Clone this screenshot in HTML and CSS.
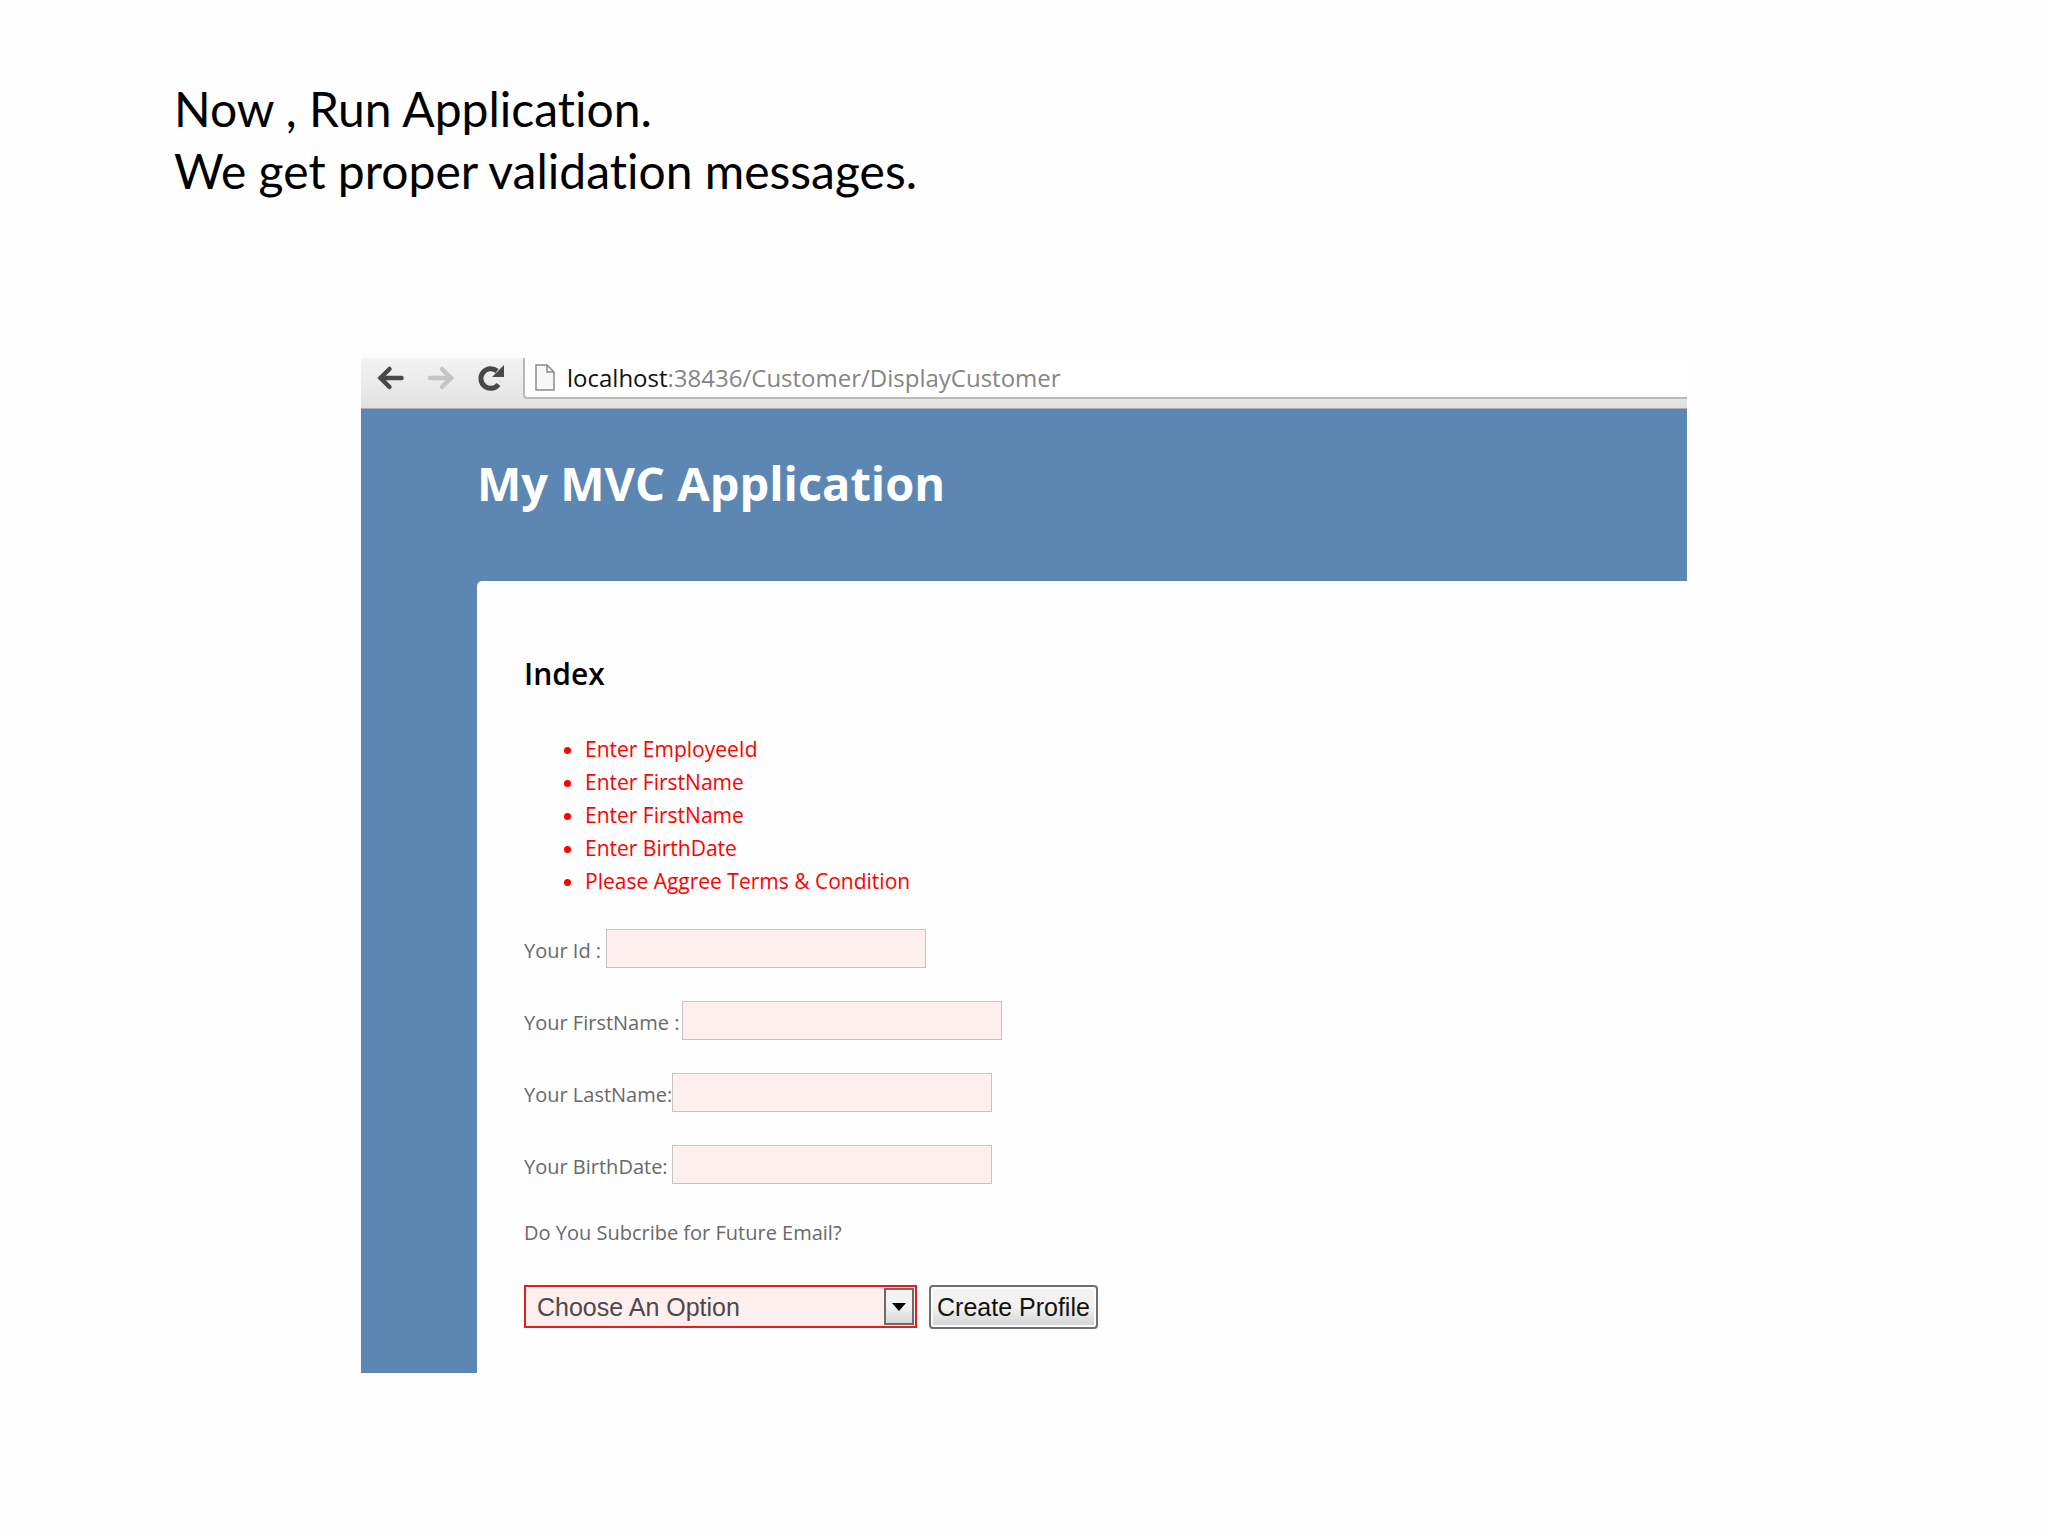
FILE: index.html
```html
<!DOCTYPE html>
<html lang="en">
<head>
<meta charset="utf-8">
<title>My MVC Application</title>
<link rel="stylesheet" href="styles.css">
</head>
<body>
<main class="slide">
  <p class="note">Now , Run Application.<br>We get proper validation messages.</p>
  <section class="browser">
    <div class="toolbar">
      <button class="nav" type="button" aria-label="Back">
        <svg width="28" height="26" viewBox="0 0 28 26" fill="none" stroke="#484848" stroke-width="4.500" stroke-linecap="round"><path d="M4 13H24.500M12.500 4L3.500 13L12.500 22"/></svg>
      </button>
      <button class="nav" type="button" aria-label="Forward" disabled>
        <svg width="28" height="26" viewBox="0 0 28 26" fill="none" stroke="#c4c4c4" stroke-width="4.500" stroke-linecap="round"><path d="M3 13H23.500M15 4L24 13L15 22"/></svg>
      </button>
      <button class="nav" type="button" aria-label="Reload">
        <svg width="28" height="28" viewBox="0 0 28 28"><path d="M21.500 20.500A9.800 9.800 0 1 1 20 7" fill="none" stroke="#484848" stroke-width="5"/><path d="M27 1V13H15Z" fill="#484848"/></svg>
      </button>
      <div class="address">
        <svg width="20" height="27" viewBox="0 0 20 27" fill="#f7f7f7" stroke="#8a8a8a" stroke-width="1.500"><path d="M1 1H12L19 8V26H1ZM12 1V8H19"/></svg>
        <span class="url"><span class="host">localhost</span>:38436/Customer/DisplayCustomer</span>
      </div>
    </div>
    <div class="site">
      <header class="banner"><h1 class="title">My MVC Application</h1></header>
      <div class="page">
        <h2 class="heading">Index</h2>
        <ul class="errors">
          <li>Enter EmployeeId</li>
          <li>Enter FirstName</li>
          <li>Enter FirstName</li>
          <li>Enter BirthDate</li>
          <li>Please Aggree Terms &amp; Condition</li>
        </ul>
        <form class="form">
          <div class="row"><label class="label label-short" for="id">Your Id :</label><input class="field" id="id" type="text"></div>
          <div class="row"><label class="label label-long" for="first">Your FirstName :</label><input class="field" id="first" type="text"></div>
          <div class="row"><label class="label" for="last">Your LastName:</label><input class="field" id="last" type="text"></div>
          <div class="row"><label class="label" for="birth">Your BirthDate:</label><input class="field" id="birth" type="text"></div>
          <label class="question" for="mail">Do You Subcribe for Future Email?</label>
          <div class="actions">
            <div class="picker">
              <select class="select" id="mail"><option>Choose An Option</option></select>
              <span class="arrow"><svg width="14" height="8" viewBox="0 0 14 8"><path d="M0 0H14L7 8Z"/></svg></span>
            </div>
            <button class="create" type="submit">Create Profile</button>
          </div>
        </form>
      </div>
    </div>
  </section>
</main>
</body>
</html>
```
FILE: styles.css
```css
* { box-sizing: border-box; }

body {
  margin: 0;
  background: #fefefe;
  color: #000;
}

.slide { padding: 78px 361px 164px; }

.note {
  margin: 0 0 156px -187px;
  font: 48px/62px Lato, sans-serif;
  font-variant-ligatures: none;
}

/* Browser toolbar */
.toolbar {
  display: flex;
  align-items: flex-start;
  height: 51px;
  padding-left: 16px;
  background: linear-gradient(#f3f3f3, #e2e2e2);
  border-bottom: 1px solid #a9b0b5;
}

.nav {
  display: flex;
  align-items: center;
  width: 50px;
  height: 40px;
  padding: 0;
  border: 0;
  background: none;
}

.address {
  display: flex;
  flex: 1;
  align-items: center;
  gap: 12px;
  height: 41px;
  margin-left: -4px;
  padding-left: 10px;
  background: #fff;
  border: solid #b9b9b9;
  border-width: 0 0 2px 2px;
  border-bottom-left-radius: 4px;
}

.url {
  color: #858585;
  font: 24px/36px "Open Sans", sans-serif;
}

.host { color: #111; }

/* Application page */
.site {
  padding-left: 116px;
  background: #5c87b2;
}

.banner { padding: 50px 0 74px; }

.title {
  margin: 0;
  color: #fff;
  font: bold 47px/48px "Open Sans", sans-serif;
}

.page {
  padding: 72px 47px 44px;
  background: #fefefe;
  border-top-left-radius: 5px;
  color: #696969;
  font: 20px/33px "Open Sans", sans-serif;
}

.heading {
  margin: 0;
  color: #000;
  font: 600 30px/42px "Open Sans", sans-serif;
}

.errors {
  margin: 38px 0 31px;
  padding-left: 61px;
  color: #f00;
  font-size: 21px;
}

.row {
  display: flex;
  align-items: center;
  margin-bottom: 33px;
}

.label {
  width: 148px;
  padding-top: 3px;
  white-space: nowrap;
}

.label-short { width: 82px; }

.label-long { width: 158px; }

.field {
  width: 320px;
  height: 39px;
  border: 1px solid #c4c4c4;
  background: #ffeeee;
  font: 20px/33px "Open Sans", sans-serif;
}

.question {
  display: block;
  line-height: 32px;
}

.actions {
  display: flex;
  gap: 12px;
  margin-top: 36px;
}

.picker { position: relative; }

.select {
  width: 393px;
  height: 43px;
  padding: 0 11px;
  appearance: none;
  border: 2px solid #e81c1c;
  border-radius: 0;
  background: #ffeeee;
  color: #4a4a4a;
  font: 25px/36px "Liberation Sans", sans-serif;
}

.arrow {
  position: absolute;
  top: 3px;
  right: 3px;
  display: flex;
  align-items: center;
  justify-content: center;
  width: 30px;
  height: 37px;
  border: 2px solid #6f6a6c;
  background: linear-gradient(#f2f2f2 50%, #d6d6d6);
  pointer-events: none;
}

.create {
  height: 44px;
  padding: 0 6px;
  border: 2px solid #707070;
  border-radius: 4px;
  background: linear-gradient(#f2f2f2 50%, #d2d2d2);
  box-shadow: inset 0 0 0 2px #fafafa;
  color: #111;
  font: 25px/36px "Liberation Sans", sans-serif;
}
```
